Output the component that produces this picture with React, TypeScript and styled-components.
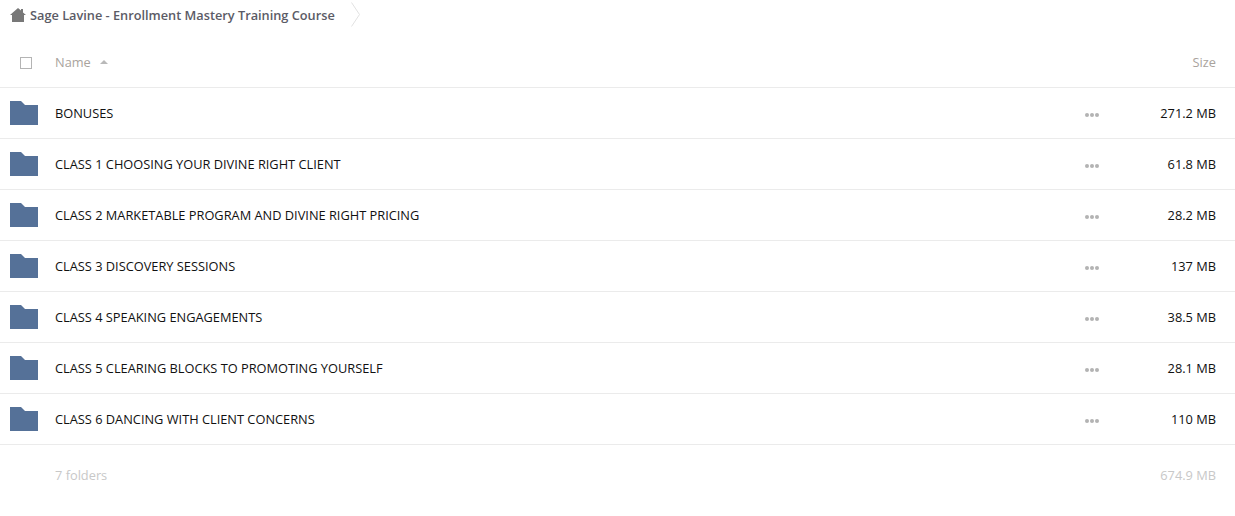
import React from "react";
import styled, { createGlobalStyle } from "styled-components";

const GlobalStyle = createGlobalStyle`
  html, body {
    margin: 0;
    padding: 0;
    background: #fff;
    font-family: "Open Sans", sans-serif;
  }
`;

const Wrapper = styled.div`
  display: flex;
  flex-direction: column;
  width: 1235px;
  height: 516px;
  overflow: hidden;
`;

const Breadcrumb = styled.div`
  display: flex;
  align-items: center;
  height: 29px;
  padding: 0 0 8px 10px;
`;

const HomeIcon = styled.svg`
  width: 16px;
  height: 14px;
  margin-right: 4px;
  fill: #787878;
`;

const Crumb = styled.span`
  font-size: 12.76px;
  font-weight: 600;
  color: #5b5b66;
`;

const Chevron = styled.svg`
  width: 9px;
  height: 25px;
  margin-left: 16px;
  fill: none;
  stroke: #e2e2e2;
`;

const HeaderRow = styled.div`
  display: flex;
  align-items: center;
  height: 50px;
  padding: 0 19px 0 20px;
  border-bottom: 1px solid #ebebeb;
`;

const Checkbox = styled.span`
  width: 10px;
  height: 10px;
  border: 1px solid #b4b4b4;
  margin: 1px 23px 0 0;
`;

const HeaderLabel = styled.span`
  font-size: 12.8px;
  color: #a9a39d;
`;

const SortArrow = styled.span`
  width: 0;
  height: 0;
  margin-left: 9px;
  border-left: 4px solid transparent;
  border-right: 4px solid transparent;
  border-bottom: 4px solid #b9b9b9;
`;

const SizeLabel = styled(HeaderLabel)`
  margin-left: auto;
`;

const Row = styled.div`
  display: flex;
  align-items: center;
  height: 50px;
  padding: 0 19px 0 10px;
  border-bottom: 1px solid #ebebeb;
`;

const FolderIcon = styled.svg`
  width: 28px;
  height: 24px;
  margin-right: 17px;
  flex: none;
  fill: #557198;
`;

const FolderName = styled.span`
  flex: 1;
  font-size: 12.8px;
  color: #111;
`;

const Dots = styled.span`
  display: flex;
  gap: 1px;
  margin-top: 3px;
`;

const Dot = styled.i`
  width: 4px;
  height: 4px;
  border-radius: 50%;
  background: #b3b3b3;
`;

const RowSize = styled.span`
  width: 117px;
  text-align: right;
  font-size: 12.8px;
  color: #111;
`;

const Footer = styled.div`
  display: flex;
  justify-content: space-between;
  align-items: center;
  height: 60px;
  padding: 0 19px 0 55px;
  font-size: 12.8px;
  color: #c8c8c8;
`;

const folders = [
  { name: "BONUSES", size: "271.2 MB" },
  { name: "CLASS 1 CHOOSING YOUR DIVINE RIGHT CLIENT", size: "61.8 MB" },
  { name: "CLASS 2 MARKETABLE PROGRAM AND DIVINE RIGHT PRICING", size: "28.2 MB" },
  { name: "CLASS 3 DISCOVERY SESSIONS", size: "137 MB" },
  { name: "CLASS 4 SPEAKING ENGAGEMENTS", size: "38.5 MB" },
  { name: "CLASS 5 CLEARING BLOCKS TO PROMOTING YOURSELF", size: "28.1 MB" },
  { name: "CLASS 6 DANCING WITH CLIENT CONCERNS", size: "110 MB" },
];

export default function App() {
  return (
    <Wrapper>
      <GlobalStyle />
      <Breadcrumb>
        <HomeIcon viewBox="0 0 16 14">
          <path d="M8 0 L11 2.6 V1 H13 V4.4 L16 7 H14 V14 H2 V7 H0 Z" />
        </HomeIcon>
        <Crumb>Sage Lavine - Enrollment Mastery Training Course</Crumb>
        <Chevron viewBox="0 0 9 25">
          <path d="M0.5 0.5 L8.5 12.5 L0.5 24.5" />
        </Chevron>
      </Breadcrumb>
      <HeaderRow>
        <Checkbox />
        <HeaderLabel>Name</HeaderLabel>
        <SortArrow />
        <SizeLabel>Size</SizeLabel>
      </HeaderRow>
      {folders.map((f) => (
        <Row key={f.name}>
          <FolderIcon viewBox="0 0 28 24">
            <path d="M0 0 H11 L15 4 H28 V24 H0 Z" />
          </FolderIcon>
          <FolderName>{f.name}</FolderName>
          <Dots>
            <Dot />
            <Dot />
            <Dot />
          </Dots>
          <RowSize>{f.size}</RowSize>
        </Row>
      ))}
      <Footer>
        <span>7 folders</span>
        <span>674.9 MB</span>
      </Footer>
    </Wrapper>
  );
}
